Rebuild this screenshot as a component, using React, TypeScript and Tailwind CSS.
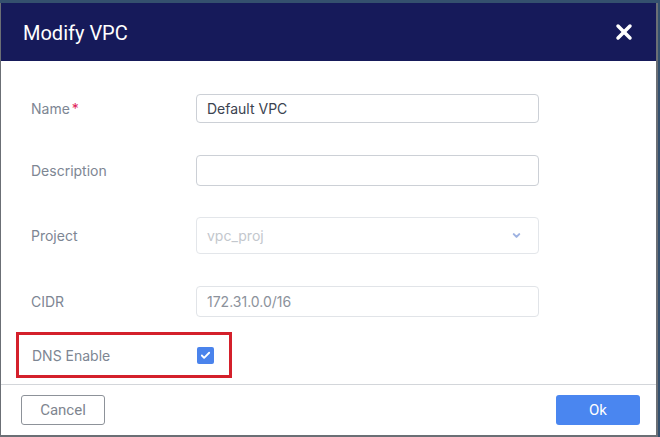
import { Check, ChevronDown, X } from "lucide-react";

const labelCls = "w-[165px] shrink-0 text-[14px] text-[#7d8693]";
const inputCls =
  "w-[343px] rounded-[4px] border border-[#ccd0d6] bg-white px-[10px] text-[14px] outline-none";

export default function App() {
  return (
    <div
      className="w-[660px] h-[437px] overflow-hidden bg-[#34506e] pt-[3px]"
      style={{ fontFamily: "Inter, 'Noto Sans', sans-serif" }}
    >
      <div className="flex h-[434px] w-[658px] flex-col border-l border-r-2 border-b-2 border-[#6b6f75] bg-white">
        {/* header */}
        <div className="flex h-[58px] shrink-0 items-center justify-between bg-[#161a5a] pl-[22px] pr-[20px]">
          <h2
            className="pt-[2px] text-[20px] text-white"
            style={{ fontFamily: "Roboto, 'Liberation Sans', sans-serif" }}
          >
            Modify VPC
          </h2>
          <button className="text-white">
            <X className="h-[24px] w-[24px]" strokeWidth={3.5} />
          </button>
        </div>

        {/* body */}
        <div className="flex flex-1 flex-col pl-[30px] pt-[33px]">
          <div className="flex h-[29px] items-center">
            <span className={labelCls}>
              Name<span className="ml-[2px] text-[#e0245a]">*</span>
            </span>
            <input
              className={`${inputCls} h-[29px] text-[#3b4350]`}
              defaultValue="Default VPC"
            />
          </div>

          <div className="mt-[32px] flex h-[31px] items-center">
            <span className={labelCls}>Description</span>
            <input className={`${inputCls} h-[31px]`} />
          </div>

          <div className="mt-[31px] flex h-[37px] items-center">
            <span className={labelCls}>Project</span>
            <div
              className={`${inputCls} flex h-[37px] items-center justify-between border-[#e3e6ea] pr-[16px] text-[#c3c7cd]`}
            >
              <span>vpc_proj</span>
              <ChevronDown className="h-[11px] w-[11px] text-[#9fb3e2]" strokeWidth={4.5} />
            </div>
          </div>

          <div className="mt-[32px] flex h-[31px] items-center">
            <span className={labelCls}>CIDR</span>
            <input
              className={`${inputCls} h-[31px] border-[#e1e4e8] text-[#8c929b]`}
              defaultValue="172.31.0.0/16"
              disabled
            />
          </div>

          <div className="-ml-[15px] mt-[15px] flex h-[46px] w-[216px] items-center border-[3px] border-[#d4202b] pl-[13px]">
            <span className="w-[165px] shrink-0 text-[14px] text-[#7d8693]">DNS Enable</span>
            <span className="flex h-[17px] w-[17px] items-center justify-center rounded-[2px] bg-[#4a83ec]">
              <Check className="h-[11px] w-[11px] text-white" strokeWidth={4} />
            </span>
          </div>
        </div>

        {/* footer */}
        <div
          className="flex h-[51px] shrink-0 items-center justify-between border-t border-[#d3d6da] pl-[20px] pr-[16px]"
          style={{ fontFamily: "Roboto, 'Liberation Sans', sans-serif" }}
        >
          <button className="h-[30px] w-[84px] rounded-[3px] border border-[#8d9299] text-[15px] text-[#7e858f]">
            Cancel
          </button>
          <button className="h-[30px] w-[84px] rounded-[3px] bg-[#4a86f0] text-[15px] text-white">
            Ok
          </button>
        </div>
      </div>
    </div>
  );
}
